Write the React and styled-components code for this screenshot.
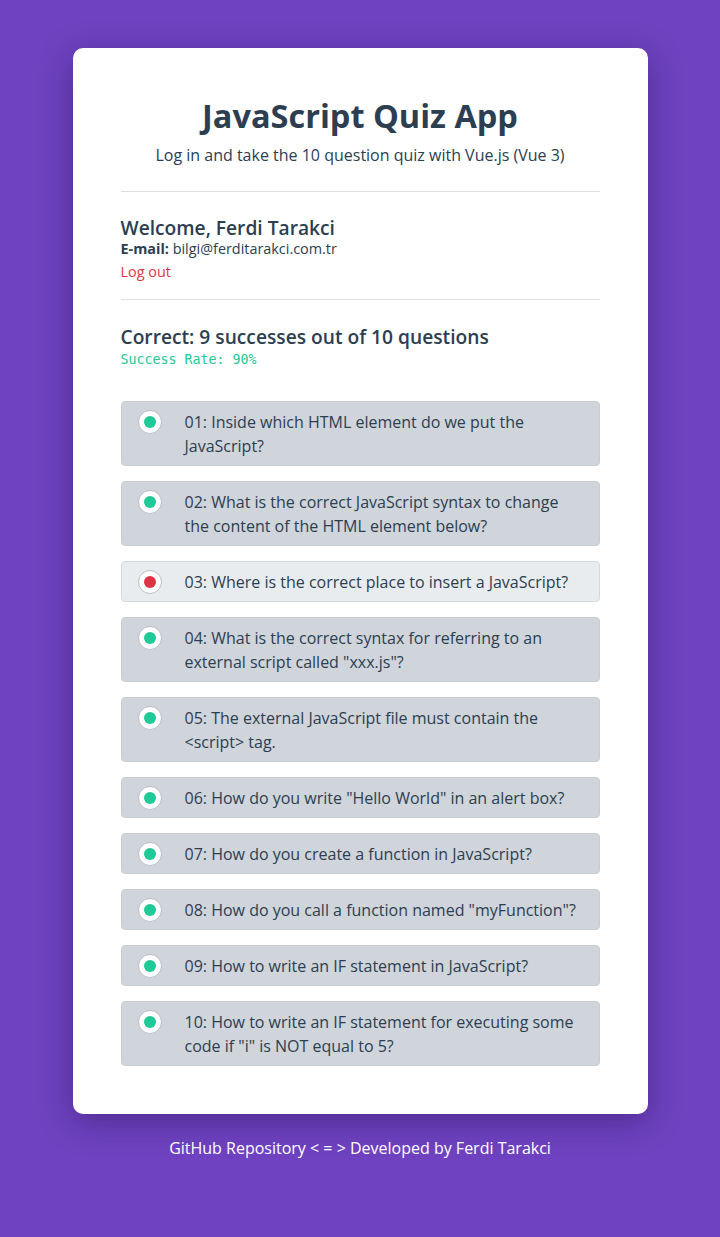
import React from "react";
import styled, { createGlobalStyle } from "styled-components";

const GlobalStyle = createGlobalStyle`
  html, body {
    margin: 0;
    padding: 0;
    background: #6f42c1;
  }
  body {
    font-family: "Open Sans", "Noto Sans", sans-serif;
    color: #2c3e50;
    min-height: 1237px;
  }
`;

const Page = styled.div`
  padding-top: 48px;
  padding-bottom: 60px;
`;

const Card = styled.div`
  width: 575px;
  box-sizing: border-box;
  margin: 0 auto;
  padding: 48px;
  background: #ffffff;
  border-radius: 10px;
  box-shadow: 0 8px 32px rgba(40, 20, 80, 0.45);
`;

const Header = styled.header`
  text-align: center;
`;

const Title = styled.h1`
  margin: 0;
  font-size: 32.5px;
  line-height: 40px;
  font-weight: 700;
  color: #2c3e50;
`;

const Subtitle = styled.p`
  margin: 7px 0 0;
  font-size: 16px;
  line-height: 24px;
`;

const Divider = styled.hr`
  border: 0;
  border-top: 1px solid #e0e0e0;
  margin: ${({ $top = 24 }) => $top}px 0 ${({ $bottom = 24 }) => $bottom}px;
`;

const Welcome = styled.h2`
  margin: 0;
  padding-top: 1px;
  font-size: 19.2px;
  line-height: 22px;
  font-weight: 600;
`;

const Email = styled.div`
  font-size: 14.4px;
  line-height: 20px;
  b {
    font-weight: 700;
  }
`;

const LogOut = styled.a`
  display: inline-block;
  margin-top: 3px;
  font-size: 14.4px;
  line-height: 20px;
  color: #dc3545;
  text-decoration: none;
  cursor: pointer;
`;

const ResultTitle = styled.h3`
  margin: 0;
  font-size: 19.2px;
  line-height: 24px;
  font-weight: 600;
`;

const Rate = styled.div`
  margin-top: 3px;
  font-family: "DejaVu Sans Mono", "Liberation Mono", monospace;
  font-size: 13.3px;
  line-height: 16px;
  color: #20c997;
`;

const List = styled.ul`
  list-style: none;
  margin: 33px 0 0;
  padding: 0;
  display: flex;
  flex-direction: column;
  gap: 15px;
`;

const Item = styled.li`
  display: flex;
  align-items: flex-start;
  gap: 23px;
  padding: 7.5px 16px;
  border: 1px solid ${({ $wrong }) => ($wrong ? "#d6dadf" : "#c8cdd3")};
  border-radius: 4px;
  background: ${({ $wrong }) => ($wrong ? "#e9ecef" : "#d0d4db")};
  font-size: 16px;
  line-height: 24px;
`;

const Radio = styled.span`
  flex: 0 0 auto;
  box-sizing: border-box;
  width: 24px;
  height: 24px;
  border-radius: 50%;
  background: #ffffff;
  border: 1px solid #b9bec4;
  display: flex;
  align-items: center;
  justify-content: center;
  &::after {
    content: "";
    width: 12px;
    height: 12px;
    border-radius: 50%;
    background: ${({ $wrong }) => ($wrong ? "#dc3545" : "#20c997")};
  }
`;

const Footer = styled.footer`
  margin-top: 22px;
  text-align: center;
  color: #ffffff;
  font-size: 16px;
  line-height: 24px;
  a {
    color: #ffffff;
    text-decoration: none;
  }
`;

const questions = [
  { text: "01: Inside which HTML element do we put the JavaScript?" },
  { text: "02: What is the correct JavaScript syntax to change the content of the HTML element below?" },
  { text: "03: Where is the correct place to insert a JavaScript?", wrong: true },
  { text: '04: What is the correct syntax for referring to an external script called "xxx.js"?' },
  { text: "05: The external JavaScript file must contain the <script> tag." },
  { text: '06: How do you write "Hello World" in an alert box?' },
  { text: "07: How do you create a function in JavaScript?" },
  { text: '08: How do you call a function named "myFunction"?' },
  { text: "09: How to write an IF statement in JavaScript?" },
  { text: '10: How to write an IF statement for executing some code if "i" is NOT equal to 5?' },
];

export default function App() {
  return (
    <Page>
      <GlobalStyle />
      <Card>
        <Header>
          <Title>JavaScript Quiz App</Title>
          <Subtitle>Log in and take the 10 question quiz with Vue.js (Vue 3)</Subtitle>
        </Header>
        <Divider />
        <Welcome>Welcome, Ferdi Tarakci</Welcome>
        <Email>
          <b>E-mail:</b> bilgi@ferditarakci.com.tr
        </Email>
        <LogOut>Log out</LogOut>
        <Divider $top={17} $bottom={25} />
        <ResultTitle>Correct: 9 successes out of 10 questions</ResultTitle>
        <Rate>Success Rate: 90%</Rate>
        <List>
          {questions.map((q) => (
            <Item key={q.text} $wrong={q.wrong}>
              <Radio $wrong={q.wrong} />
              <span>{q.text}</span>
            </Item>
          ))}
        </List>
      </Card>
      <Footer>
        <a>GitHub Repository</a> &lt; = &gt; <a>Developed by Ferdi Tarakci</a>
      </Footer>
    </Page>
  );
}
